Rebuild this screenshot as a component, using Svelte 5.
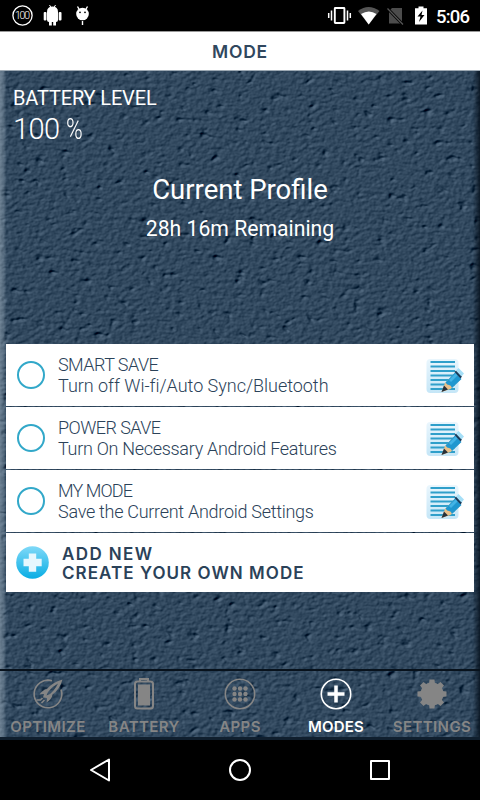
<script lang="ts">
  interface Mode {
    title: string;
    detail: string;
    titleSpacing: number;
    detailSpacing: number;
  }

  const modes: Mode[] = [
    { title: "SMART SAVE", detail: "Turn off Wi-fi/Auto Sync/Bluetooth", titleSpacing: -0.55, detailSpacing: -0.03 },
    { title: "POWER SAVE", detail: "Turn On Necessary Android Features", titleSpacing: -0.55, detailSpacing: -0.3 },
    { title: "MY MODE", detail: "Save the Current Android Settings", titleSpacing: -0.9, detailSpacing: -0.28 },
  ];

  const tabs = ["OPTIMIZE", "BATTERY", "APPS", "MODES", "SETTINGS"];
  const dots = [-5.5, 0, 5.5];
  const teeth = [0, 45, 90, 135, 180, 225, 270, 315];
  const lines = [4, 8.5, 13, 17.5, 22, 26.5, 31];

  let activeTab = $state("MODES");
</script>

<div class="phone">
  <div class="status">
    <svg width="100" height="31" viewBox="0 0 100 31">
      <circle cx="22.5" cy="15.5" r="9.6" fill="none" stroke="#fff" stroke-width="1.3" />
      <text x="22.5" y="19" text-anchor="middle" textLength="15" class="gauge">100</text>
      <g fill="#fff">
        <path d="M47 12q0-5.500 5.500-5.500t5.500 5.500v8q0 2-2 2v3.500h-2.800V22h-1.400v3.500H49V22q-2 0-2-2z" />
        <rect x="43.700" y="12" width="2.800" height="8.500" rx="1" />
        <rect x="58.700" y="12" width="2.800" height="8.500" rx="1" />
        <path d="M49.500 5l1.500 2.500M55.500 5L54 7.500" stroke="#fff" />
        <circle cx="82.500" cy="14" r="6.300" />
        <path d="M77.500 6.500l2 3.500M87.500 6.500l-2 3.500M82.500 21v4" stroke="#fff" stroke-width="1.400" />
      </g>
      <circle cx="80" cy="12.300" r=".9" />
      <circle cx="85" cy="12.300" r=".9" />
    </svg>
    <svg width="160" height="31" viewBox="320 0 160 31">
      <rect x="334.800" y="8" width="9.600" height="15" rx=".5" fill="none" stroke="#fff" stroke-width="1.900" />
      <path d="M331.500 10.500v10M328.700 13v5M347.500 10.500v10M350.300 13v5" stroke="#fff" stroke-width="1.500" />
      <path d="M358 11q10.500-8 21.500 0L368.700 24.500z" fill="#555" />
      <path d="M361 14q8-5 15.500 0l-7.800 10.500z" fill="#fff" />
      <path d="M392 8h10v15.500h-13V11z" fill="#4c4c4c" />
      <path d="M387.500 8.500l15.500 16" stroke="#000" stroke-width="3" />
      <path d="M387.500 8.500l15.500 16" stroke="#555" stroke-width="1.300" />
      <path d="M415 8.300h3.500V6.500h5v1.800h3.500v16.200h-12z" fill="#fff" />
      <path d="M422.500 10.500l-5 6h3l-1.500 5.500 5.500-7h-3z" fill="#000" />
      <text x="436" y="22.500" textLength="34" class="clock">5:06</text>
    </svg>
  </div>

  <header>MODE</header>

  <main>
    <svg class="leather" width="480" height="669" aria-hidden="true">
      <defs>
        <filter id="leather" x="0" y="0" width="100%" height="100%" color-interpolation-filters="sRGB">
          <feTurbulence type="fractalNoise" baseFrequency=".19 .27" numOctaves="3" seed="8" result="grain" />
          <feTurbulence type="fractalNoise" baseFrequency=".085 .13" numOctaves="2" seed="21" />
          <feComponentTransfer result="pits">
            <feFuncA type="table" tableValues="0 0 .3 .8 1 1 1 1 1 1 1" />
          </feComponentTransfer>
          <feComposite in="grain" in2="pits" operator="arithmetic" k2=".4" k3=".6" />
          <feDiffuseLighting surfaceScale="1.700" diffuseConstant="1" lighting-color="#fff">
            <feDistantLight azimuth="220" elevation="45" />
          </feDiffuseLighting>
          <feColorMatrix values=".5 0 0 0 -.158  0 .5 0 0 -.067  0 0 .5 0 .018  0 0 0 0 1" />
        </filter>
        <linearGradient id="edge">
          <stop stop-color="#a7b8c6" stop-opacity=".5" />
          <stop offset=".008" stop-color="#a7b8c6" stop-opacity=".3" />
          <stop offset=".013" stop-color="#a7b8c6" stop-opacity="0" />
          <stop offset=".985" stop-color="#05101c" stop-opacity="0" />
          <stop offset="1" stop-color="#05101c" stop-opacity=".85" />
        </linearGradient>
      </defs>
      <rect width="480" height="669" filter="url(#leather)" />
      <rect width="480" height="669" fill="url(#edge)" />
    </svg>

    <section class="level">
      <p class="caption">BATTERY LEVEL</p>
      <p class="percent">100 <span>%</span></p>
    </section>

    <section class="profile">
      <h1>Current Profile</h1>
      <p>28h 16m Remaining</p>
    </section>

    <section class="modes">
      {#each modes as mode}
        <div class="mode">
          <span class="radio"></span>
          <div class="copy">
            <p style="letter-spacing: {mode.titleSpacing}px">{mode.title}</p>
            <p style="letter-spacing: {mode.detailSpacing}px">{mode.detail}</p>
          </div>
          <svg width="40" height="36" viewBox="0 0 40 36">
            <rect x=".5" y="1" width="32" height="34" rx="4" fill="url(#paper)" />
            {#each lines as y}
              <path d="M4.500 {y}h24.500" stroke="#2f9fca" stroke-width="2" />
            {/each}
            <path d="M15.500 34l3.500-9 9.500-9.500 6 6-10 9.500z" fill="#e9c08a" />
            <path d="M15.500 34l2.500-6.500 4 4z" fill="#26303a" />
            <path d="M19.500 24.500l9.500-10 6.500 6.500-9.500 9q-1-3-3-3t-3.500-2.500z" fill="#1f97d0" />
            <path d="M23 22l7-7 2 2-7 7z" fill="#43b4e6" />
            <path d="M28.500 14l1.500-1.500 6 6-1.500 2z" fill="#193a59" />
            <path d="M30 12.500l2.500-2.500 5.500 5.500-2.500 3z" fill="#a6dff7" />
          </svg>
        </div>
      {/each}
      <div class="add">
        <svg width="33" height="33" viewBox="0 0 33 33">
          <defs>
            <linearGradient id="ball" x2="0" y2="1">
              <stop stop-color="#80d9f8" />
              <stop offset="1" stop-color="#08ade4" />
            </linearGradient>
            <linearGradient id="paper" x2="0" y2="1">
              <stop stop-color="#eaf6fd" />
              <stop offset="1" stop-color="#c5e6f7" />
            </linearGradient>
          </defs>
          <circle cx="16.500" cy="16.500" r="16.300" fill="url(#ball)" />
          <path d="M12.800 7.500h7.400v5.300h5.500v7.400h-5.500v5.500h-7.400v-5.500H7.500v-7.400h5.300z" fill="#e6f7fe" />
        </svg>
        <div>
          <p class="new">ADD NEW</p>
          <p class="own">CREATE YOUR OWN MODE</p>
        </div>
      </div>
    </section>

    <nav class="tabs">
      {#each tabs as tab}
        <button type="button" class:active={activeTab === tab} onclick={() => (activeTab = tab)}>
          <svg width="34" height="34" viewBox="-17 -17 34 34" fill="none" stroke="currentColor" stroke-width="1.600">
            {#if tab === "OPTIMIZE"}
              <path d="M4-13.200A13.800 13.800 0 1 0 13-4.500" />
              <path
                d="M14.500-14.500Q4-11.500-1-5-5-4.500-8.500.5L-4 0-5 3.500-1 4-1.500 8.500Q4 5 4.500.5 12-5 14.500-14.500zM10-10.500Q4-7.500 0-2L-1.500 1.500Q3 0 5.500-3.500 8.500-7 10-10.500z"
                fill="currentColor"
                fill-rule="evenodd"
                stroke="none"
              />
              <path d="M-5.500 4l-2 2h-4M-3.500 6L-6.500 9" />
            {:else if tab === "BATTERY"}
              <path d="M-4-12.500v-2.500h8v2.500" stroke-width="2" />
              <rect x="-9" y="-12.500" width="18" height="27" rx="2.500" stroke-width="2" />
              <rect x="-6" y="-9.500" width="12" height="21" fill="currentColor" stroke="none" />
            {:else if tab === "APPS"}
              <circle r="14.700" />
              {#each dots as x}
                {#each dots as y}
                  <circle cx={x} cy={y} r="2.200" fill="currentColor" stroke="none" />
                {/each}
              {/each}
            {:else if tab === "MODES"}
              <circle r="14.700" />
              <path d="M0-8.500v17M-8.500 0h17" stroke-width="3.500" />
            {:else}
              <circle r="11.500" fill="currentColor" stroke="none" />
              {#each teeth as angle}
                <path d="M-3-10l.5-4.500h5L3-10z" transform="rotate({angle})" fill="currentColor" stroke="none" />
              {/each}
            {/if}
          </svg>
          <span>{tab}</span>
        </button>
      {/each}
    </nav>
  </main>

  <footer>
    <svg width="480" height="60" viewBox="0 740 480 60" fill="none" stroke="#fff" stroke-width="2" stroke-linejoin="round">
      <path d="M91 770l18-10.500v21z" />
      <circle cx="240" cy="770" r="10" />
      <rect x="371" y="761" width="18" height="18" />
    </svg>
  </footer>
</div>

<style>
  :global(body) {
    margin: 0;
    background: #000;
  }

  .phone {
    width: 480px;
    height: 800px;
    display: flex;
    flex-direction: column;
    overflow: hidden;
    font-family: Roboto, sans-serif;
  }

  p,
  h1 {
    margin: 0;
    white-space: nowrap;
  }

  svg {
    display: block;
    flex: none;
  }

  .status {
    height: 31px;
    display: flex;
    justify-content: space-between;
    background: #000;
  }

  .gauge {
    fill: #fff;
    font-size: 10.5px;
    font-weight: 300;
  }

  .clock {
    fill: #fff;
    font-size: 18.5px;
    font-weight: 500;
  }

  header {
    height: 40px;
    box-sizing: border-box;
    border-bottom: 1px solid #9da9b3;
    border-top: 1px solid #999;
    background: #fff;
    color: #30475e;
    font: 600 17.5px/40px Inter, sans-serif;
    letter-spacing: 0.8px;
    text-align: center;
  }

  main {
    position: relative;
    height: 669px;
    display: flex;
    flex-direction: column;
    color: #fff;
  }

  .leather {
    position: absolute;
    inset: 0;
    z-index: -1;
  }

  .level {
    height: 101px;
    padding: 14px 13px 0;
    box-sizing: border-box;
  }

  .caption {
    font-size: 20px;
    letter-spacing: -0.15px;
    line-height: 26px;
  }

  .percent {
    font-size: 29px;
    font-weight: 300;
    letter-spacing: -0.6px;
    line-height: 37px;
  }

  .percent span {
    display: inline-block;
    transform: scaleX(0.78);
    transform-origin: left;
  }

  .profile {
    height: 172px;
    text-align: center;
  }

  h1 {
    font-size: 27.5px;
    font-weight: 400;
    line-height: 36px;
  }

  .profile p {
    font-size: 21.2px;
    line-height: 42px;
  }

  .modes {
    margin: 0 6px;
    color: #2b4259;
  }

  .mode {
    display: flex;
    align-items: center;
    height: 62px;
    padding: 0 8px 0 11px;
    margin-bottom: 1px;
    background: #fff;
  }

  .mode svg {
    margin-top: 2px;
  }

  .radio {
    width: 28px;
    height: 28px;
    box-sizing: border-box;
    border: 2px solid #32a8c9;
    border-radius: 50%;
  }

  .copy {
    flex: 1;
    margin-left: 13px;
    font-size: 18px;
    font-weight: 300;
    line-height: 21px;
  }

  .add {
    display: flex;
    align-items: center;
    gap: 13px;
    height: 59px;
    padding-left: 10px;
    margin-top: 1px;
    background: #fff;
    font: 600 17px/19px Inter, sans-serif;
  }

  .new {
    padding-top: 2px;
    letter-spacing: 1.4px;
  }

  .own {
    letter-spacing: 1.05px;
  }

  .tabs {
    display: grid;
    grid-template-columns: repeat(5, 96px);
    height: 71px;
    margin-top: auto;
    border-top: 2px solid #08121c;
    border-bottom: 3px solid #101f2e;
    box-sizing: border-box;
  }

  .tabs button {
    display: flex;
    flex-direction: column;
    align-items: center;
    padding: 6px 0 0;
    border: 0;
    background: none;
    color: #858585;
    font: 600 15px/18px Inter, sans-serif;
    letter-spacing: 0.4px;
  }

  .tabs span {
    margin-top: 7px;
  }

  .tabs .active {
    color: #fff;
    letter-spacing: 0.2px;
  }

  footer {
    height: 60px;
    background: #000;
  }
</style>
